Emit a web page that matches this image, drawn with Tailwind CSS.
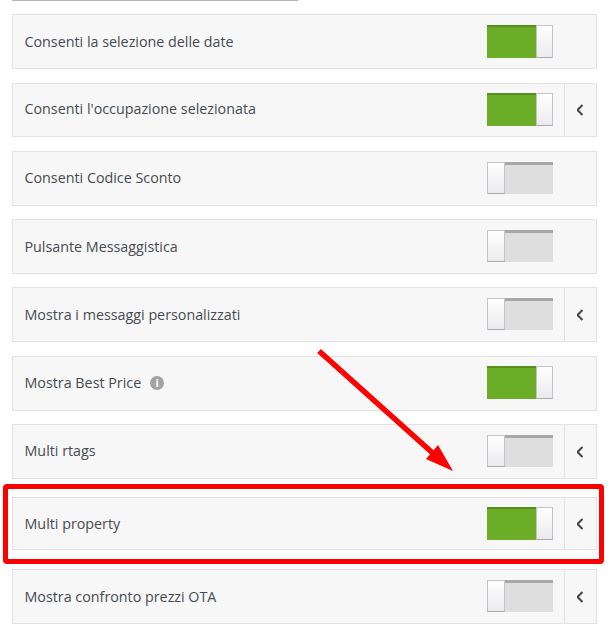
<!DOCTYPE html>
<html lang="it">
<head>
  <meta charset="UTF-8" />
  <meta name="viewport" content="width=device-width, initial-scale=1" />
  <title>Impostazioni</title>
  <script src="https://cdn.jsdelivr.net/npm/@tailwindcss/browser@4"></script>
</head>
<body class="bg-white font-['Open_Sans',sans-serif] text-[14.3px] text-[#464b52] overflow-hidden">
  <div class="relative w-[611px] h-[637px] px-[12px]">
    <div class="w-[286px] h-[1px] bg-[#b5b5b5]"></div>

    <div class="mt-[13px] h-[55px] flex items-center bg-[#f7f7f7] border border-[#e2e2e2] w-[585px]">
      <span class="ml-[11.5px] flex-1">Consenti la selezione delle date</span>
      <div class="flex self-start mt-[10px] w-[66px] h-[33px] mr-[43px]"><div class="flex-1 bg-[#6cad27] border-t-2 border-[#578f1e]"></div><div class="w-[17px] bg-gradient-to-b from-white to-[#ebebef] border border-[#c4c4c4] border-b-[#aaaaaa]"></div></div>
    </div>

    <div class="mt-[14px] h-[54px] flex items-center bg-[#f7f7f7] border border-[#e2e2e2] w-[585px]">
      <span class="ml-[11.5px] flex-1 pb-[2px]">Consenti l'occupazione selezionata</span>
      <div class="flex self-start mt-[9px] w-[66px] h-[33px] mr-[11px]"><div class="flex-1 bg-[#6cad27] border-t-2 border-[#578f1e]"></div><div class="w-[17px] bg-gradient-to-b from-white to-[#ebebef] border border-[#c4c4c4] border-b-[#aaaaaa]"></div></div>
      <div class="w-[32px] h-full flex items-center justify-center border-l border-[#e2e2e2]"><svg width="8" height="12" viewBox="0 0 8 12" fill="none" stroke="#444" stroke-width="2"><path d="M5.5 1 L0.5 6 L5.5 11"/></svg></div>
    </div>

    <div class="mt-[14px] h-[55px] flex items-center bg-[#f7f7f7] border border-[#e2e2e2] w-[585px]">
      <span class="ml-[11.5px] flex-1 pb-[2px]">Consenti Codice Sconto</span>
      <div class="flex self-start mt-[10px] w-[66px] h-[32px] mr-[43px]"><div class="w-[18px] bg-gradient-to-b from-white to-[#ebebef] border border-[#c4c4c4] border-b-[#aaaaaa]"></div><div class="flex-1 bg-[#dedede] border-t-[3px] border-[#a8a8a8]"></div></div>
    </div>

    <div class="mt-[13px] h-[55px] flex items-center bg-[#f7f7f7] border border-[#e2e2e2] w-[585px]">
      <span class="ml-[11.5px] flex-1">Pulsante Messaggistica</span>
      <div class="flex self-start mt-[10px] w-[66px] h-[32px] mr-[43px]"><div class="w-[18px] bg-gradient-to-b from-white to-[#ebebef] border border-[#c4c4c4] border-b-[#aaaaaa]"></div><div class="flex-1 bg-[#dedede] border-t-[3px] border-[#a8a8a8]"></div></div>
    </div>

    <div class="mt-[13px] h-[55px] flex items-center bg-[#f7f7f7] border border-[#e2e2e2] w-[585px]">
      <span class="ml-[11.5px] flex-1">Mostra i messaggi personalizzati</span>
      <div class="flex self-start mt-[10px] w-[66px] h-[32px] mr-[11px]"><div class="w-[18px] bg-gradient-to-b from-white to-[#ebebef] border border-[#c4c4c4] border-b-[#aaaaaa]"></div><div class="flex-1 bg-[#dedede] border-t-[3px] border-[#a8a8a8]"></div></div>
      <div class="w-[32px] h-full flex items-center justify-center border-l border-[#e2e2e2]"><svg width="8" height="12" viewBox="0 0 8 12" fill="none" stroke="#444" stroke-width="2"><path d="M5.5 1 L0.5 6 L5.5 11"/></svg></div>
    </div>

    <div class="mt-[14px] h-[55px] flex items-center bg-[#f7f7f7] border border-[#e2e2e2] w-[585px]">
      <span class="ml-[11.5px] pb-[2px]">Mostra Best Price</span>
      <span class="ml-[9px] mb-[1px] w-[14px] h-[14px] rounded-full bg-[#a3a3a3] text-white text-[11px] font-bold leading-[14px] text-center">i</span>
      <span class="flex-1"></span>
      <div class="flex self-start mt-[9px] w-[66px] h-[33px] mr-[43px]"><div class="flex-1 bg-[#6cad27] border-t-2 border-[#578f1e]"></div><div class="w-[17px] bg-gradient-to-b from-white to-[#ebebef] border border-[#c4c4c4] border-b-[#aaaaaa]"></div></div>
    </div>

    <div class="mt-[13px] h-[55px] flex items-center bg-[#f7f7f7] border border-[#e2e2e2] w-[585px]">
      <span class="ml-[11.5px] flex-1 pb-[2px]">Multi rtags</span>
      <div class="flex self-start mt-[10px] w-[66px] h-[32px] mr-[11px]"><div class="w-[18px] bg-gradient-to-b from-white to-[#ebebef] border border-[#c4c4c4] border-b-[#aaaaaa]"></div><div class="flex-1 bg-[#dedede] border-t-[3px] border-[#a8a8a8]"></div></div>
      <div class="w-[32px] h-full flex items-center justify-center border-l border-[#e2e2e2]"><svg width="8" height="12" viewBox="0 0 8 12" fill="none" stroke="#444" stroke-width="2"><path d="M5.5 1 L0.5 6 L5.5 11"/></svg></div>
    </div>

    <div class="mt-[18px] h-[53px] flex items-center bg-[#f7f7f7] border border-[#e2e2e2] w-[585px]">
      <span class="ml-[11.5px] flex-1">Multi property</span>
      <div class="flex self-start mt-[9px] w-[66px] h-[33px] mr-[11px]"><div class="flex-1 bg-[#6cad27] border-t-2 border-[#578f1e]"></div><div class="w-[17px] bg-gradient-to-b from-white to-[#ebebef] border border-[#c4c4c4] border-b-[#aaaaaa]"></div></div>
      <div class="w-[32px] h-full flex items-center justify-center border-l border-[#e2e2e2]"><svg width="8" height="12" viewBox="0 0 8 12" fill="none" stroke="#444" stroke-width="2"><path d="M5.5 1 L0.5 6 L5.5 11"/></svg></div>
    </div>

    <div class="mt-[19px] h-[55px] flex items-center bg-[#f7f7f7] border border-[#e2e2e2] w-[585px]">
      <span class="ml-[11.5px] flex-1">Mostra confronto prezzi OTA</span>
      <div class="flex self-start mt-[10px] w-[66px] h-[32px] mr-[11px]"><div class="w-[18px] bg-gradient-to-b from-white to-[#ebebef] border border-[#c4c4c4] border-b-[#aaaaaa]"></div><div class="flex-1 bg-[#dedede] border-t-[3px] border-[#a8a8a8]"></div></div>
      <div class="w-[32px] h-full flex items-center justify-center border-l border-[#e2e2e2]"><svg width="8" height="12" viewBox="0 0 8 12" fill="none" stroke="#444" stroke-width="2"><path d="M5.5 1 L0.5 6 L5.5 11"/></svg></div>
    </div>

    <!-- annotation over the screenshot -->
    <div class="absolute left-[3px] top-[484px] w-[601px] h-[80px] border-[5px] border-[#ff0000] rounded-[4px]"></div>
    <svg class="absolute left-0 top-0" width="611" height="637" viewBox="0 0 611 637">
      <line x1="319" y1="351" x2="436" y2="456" stroke="#ff0000" stroke-width="5.5"/>
      <polygon points="453,471 426,459 438,445" fill="#ff0000"/>
    </svg>
  </div>
</body>
</html>
